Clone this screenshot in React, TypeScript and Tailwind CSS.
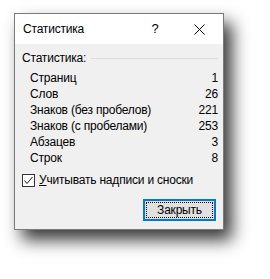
import React from 'react';

const rows: [string, string][] = [
  ['Страниц', '1'],
  ['Слов', '26'],
  ['Знаков (без пробелов)', '221'],
  ['Знаков (с пробелами)', '253'],
  ['Абзацев', '3'],
  ['Строк', '8'],
];

export default function App() {
  return (
    <div
      className="w-[270px] h-[279px] bg-white pt-[13px] pl-[14px] text-[12px] leading-[16px] tracking-[-0.2px] text-black"
      style={{ fontFamily: '"Liberation Sans", Arial, sans-serif' }}
    >
      <div className="w-[210px] h-[217px] border border-[#7a7a7a] flex flex-col bg-[#f0f0f0] shadow-[8px_10px_16px_rgba(0,0,0,0.78)]">
        {/* title bar */}
        <div className="h-[30px] bg-white flex items-center pl-[8px]">
          <span className="flex-1">Статистика</span>
          <span className="w-[14px] text-center text-[13px] mr-[32px]">?</span>
          <svg width="11" height="11" viewBox="0 0 11 11" className="mr-[18px]">
            <path d="M0.5 0.5 L10.5 10.5 M10.5 0.5 L0.5 10.5" stroke="#000" strokeWidth="1" />
          </svg>
        </div>

        {/* body */}
        <div className="flex-1 flex flex-col pt-[6px] pl-[7px] pr-[5px]">
          <div className="flex items-center">
            <span>Статистика:</span>
            <div className="flex-1 h-px bg-[#dcdcdc] ml-[5px]" />
          </div>

          <div className="flex flex-col mt-[4px] pl-[8px]">
            {rows.map(([label, value]) => (
              <div key={label} className="flex justify-between h-[16px]">
                <span>{label}</span>
                <span>{value}</span>
              </div>
            ))}
          </div>

          <label className="flex items-center mt-[6px] h-[16px]">
            <span className="w-[13px] h-[13px] border border-[#333] bg-white flex items-center justify-center">
              <svg width="11" height="11" viewBox="0 0 11 11">
                <path d="M1.5 5.5 L4 8.5 L9.5 2" fill="none" stroke="#222" strokeWidth="1" />
              </svg>
            </span>
            <span className="ml-[4px]">
              <span className="underline">У</span>читывать надписи и сноски
            </span>
          </label>

          <div className="flex justify-end mt-[11px] pr-[2px]">
            <button className="w-[73px] h-[22px] border-2 border-[#0078d7] bg-[#e1e1e1] p-px">
              <span className="flex w-full h-full items-center justify-center border border-dotted border-black">
                Закрыть
              </span>
            </button>
          </div>
        </div>
      </div>
    </div>
  );
}
